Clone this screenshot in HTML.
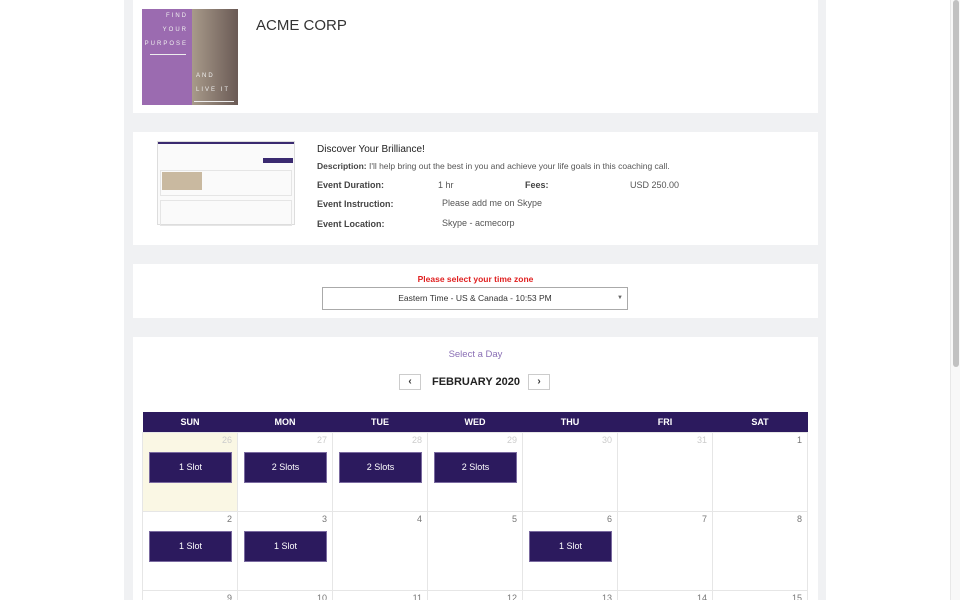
<!DOCTYPE html><html style="width:960px;height:600px;overflow:hidden"><head><style>
*{box-sizing:border-box;margin:0;padding:0}
body{width:960px;height:600px;overflow:hidden;background:#fff;font-family:"Liberation Sans",sans-serif;position:relative;color:#333}
.col{position:absolute;left:124px;top:0;width:702px;height:600px;background:#f0f1f3}
.card{position:absolute;left:133px;width:685px;background:#fff;overflow:hidden}
.sb{position:absolute;left:950px;top:0;width:10px;height:600px;background:#f8f8f8;border-left:1px solid #e8e8e8}
.sb div{position:absolute;left:2px;top:0;width:6px;height:367px;background:#c1c1c1;border-radius:3px}
.lbl{position:absolute;font-size:9px;font-weight:bold;color:#444}
.val{position:absolute;font-size:9px;color:#555}
table{position:absolute;left:9px;top:75px;width:666px;border-collapse:collapse;table-layout:fixed}
th{background:#2c1a5e;color:#fff;font-size:9px;height:20px;font-weight:bold}
td{border:1px solid #e6e6e6;height:79px;vertical-align:top;position:relative;font-size:9px;color:#777;text-align:right;padding:2px 5px}
td.g{color:#ccc}
.s{position:absolute;left:6px;top:19px;width:83px;height:31px;background:#2c1a5e;border:1px solid #7a6aa0;color:#fff;font-size:9px;text-align:center;line-height:29px}
</style></head><body>
<div class="col"></div>
<div class="card" style="top:0;height:113px">
<div style="position:absolute;left:9px;top:9px;width:96px;height:96px;background:linear-gradient(90deg,#9b6bb0 0,#9b6bb0 52%,#a89a8a 52%,#6a5a55 100%)">
<div style="position:absolute;left:0;width:50px;top:0;color:#eee;font-size:6px;letter-spacing:2px;text-align:right;line-height:14px;padding-right:4px">FIND<br>YOUR<br>PURPOSE</div>
<div style="position:absolute;left:8px;top:45px;width:36px;height:1px;background:#eee"></div>
<div style="position:absolute;left:54px;top:60px;color:#eee;font-size:6px;letter-spacing:2px;line-height:14px">AND<br>LIVE IT</div>
<div style="position:absolute;left:52px;top:92px;width:40px;height:1px;background:#eee"></div>
</div>
<div style="position:absolute;left:123px;top:17px;font-size:15px;color:#333">ACME CORP</div>
</div>
<div class="card" style="top:132px;height:113px">
<div style="position:absolute;left:24px;top:9px;width:138px;height:84px;border:1px solid #ddd;background:#fafafa">
<div style="height:2px;background:#3a2a70"></div>
<div style="position:absolute;left:4px;top:30px;width:40px;height:18px;background:#c9b9a0"></div>
<div style="position:absolute;left:2px;top:28px;width:132px;height:26px;border:1px solid #e5e5e5"></div>
<div style="position:absolute;left:2px;top:58px;width:132px;height:26px;border:1px solid #e5e5e5"></div>
<div style="position:absolute;left:105px;top:16px;width:30px;height:5px;background:#3a2a70"></div>
</div>
<div style="position:absolute;left:184px;top:12px;font-size:10px;color:#222">Discover Your Brilliance!</div>
<div style="position:absolute;left:184px;top:29px;font-size:8.5px;color:#555"><b style="color:#444">Description:</b> I'll help bring out the best in you and achieve your life goals in this coaching call.</div>
<div class="lbl" style="left:184px;top:48px">Event Duration:</div><div class="val" style="left:305px;top:48px">1 hr</div>
<div class="lbl" style="left:392px;top:48px">Fees:</div><div class="val" style="left:497px;top:48px">USD 250.00</div>
<div class="lbl" style="left:184px;top:67px">Event Instruction:</div><div class="val" style="left:309px;top:66px">Please add me on Skype</div>
<div class="lbl" style="left:184px;top:87px">Event Location:</div><div class="val" style="left:309px;top:86px">Skype - acmecorp</div>
</div>
<div class="card" style="top:264px;height:54px">
<div style="position:absolute;left:0;width:100%;top:10px;text-align:center;font-size:8.5px;font-weight:bold;color:#e02020">Please select your time zone</div>
<div style="position:absolute;left:189px;top:23px;width:306px;height:23px;border:1px solid #aaa;font-size:8.5px;text-align:center;line-height:21px;color:#333">Eastern Time - US &amp; Canada - 10:53 PM<span style="position:absolute;right:4px;font-size:6px;color:#666">▼</span></div>
</div>
<div class="card" style="top:337px;height:263px">
<div style="position:absolute;left:0;width:100%;top:12px;text-align:center;font-size:9.5px;color:#8a6fb5">Select a Day</div>
<div style="position:absolute;left:266px;top:37px;width:22px;height:16px;border:1px solid #ccc;text-align:center;font-size:10px;line-height:14px;font-weight:bold">‹</div>
<div style="position:absolute;left:0;width:686px;top:39px;text-align:center;font-size:11px;font-weight:bold;color:#222">FEBRUARY 2020</div>
<div style="position:absolute;left:395px;top:37px;width:22px;height:16px;border:1px solid #ccc;text-align:center;font-size:10px;line-height:14px;font-weight:bold">›</div>
<table><tr><th>SUN</th><th>MON</th><th>TUE</th><th>WED</th><th>THU</th><th>FRI</th><th>SAT</th></tr>
<tr><td class="g" style="background:#faf7e4">26<div class="s">1 Slot</div></td><td class="g">27<div class="s">2 Slots</div></td><td class="g">28<div class="s">2 Slots</div></td><td class="g">29<div class="s">2 Slots</div></td><td class="g">30</td><td class="g">31</td><td>1</td></tr>
<tr><td>2<div class="s">1 Slot</div></td><td>3<div class="s">1 Slot</div></td><td>4</td><td>5</td><td>6<div class="s">1 Slot</div></td><td>7</td><td>8</td></tr>
<tr><td>9</td><td>10</td><td>11</td><td>12</td><td>13</td><td>14</td><td>15</td></tr></table>
</div>
<div class="sb"><div></div></div>
</body></html>
